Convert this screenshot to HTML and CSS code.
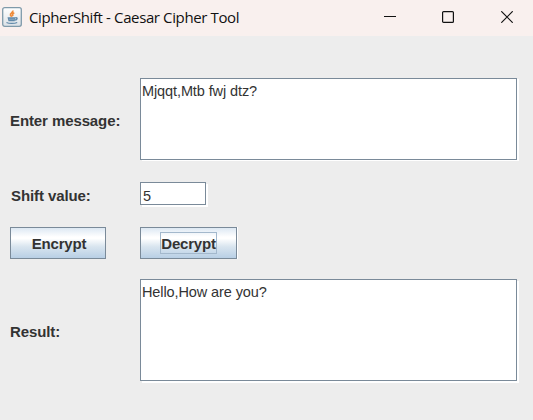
FILE: index.html
```html
<!DOCTYPE html>
<html lang="en">
<head>
<meta charset="utf-8">
<title>CipherShift - Caesar Cipher Tool</title>
<link rel="stylesheet" href="styles.css">
</head>
<body>
<header class="titlebar">
  <svg class="app-icon" width="20" height="20" viewBox="0 0 20 20">
    <defs><linearGradient id="tile" x1="0" y1="0" x2="0" y2="1"><stop offset="0" stop-color="#fff"/><stop offset="1" stop-color="#dbe1e6"/></linearGradient></defs>
    <rect x=".7" y=".7" width="18.6" height="18.6" rx="2" fill="url(#tile)" stroke="#7f9aaa" stroke-width="1.3"/>
    <path d="M10.8 3.500c.8 2-3 2.600-2.300 4.500.2.700.9 1.200 1.200 1.800M12.300 5.800c-1.700.7-2.300 1.600-1.200 3.200" fill="none" stroke="#ee8b3a" stroke-width="1.700"/>
    <path d="M5.500 10.300h8l-.8 3.900H6.500z" fill="#6189a9"/>
    <path d="M13.300 10.800c2.600-.5 2.300 2.100-.4 2.300M4.500 15.500c2.500 1.300 8 1.300 10.700 0" fill="none" stroke="#6189a9" stroke-width="1.300"/>
    <path d="M7 12.200h5.600" stroke="#a9c1d3" stroke-width=".6"/>
  </svg>
  <h1 class="title">CipherShift - Caesar Cipher Tool</h1>
  <div class="controls">
    <svg width="12" height="12" viewBox="0 0 12 12"><path d="M0 5.500h12" stroke="#111"/></svg>
    <svg width="12" height="12" viewBox="0 0 12 12"><rect x=".6" y=".6" width="10.800" height="10.800" rx="1" fill="none" stroke="#111" stroke-width="1.200"/></svg>
    <svg width="12" height="12" viewBox="0 0 12 12"><path d="M.3.300l11.400 11.400M11.700.3L.3 11.700" stroke="#111" stroke-width="1.200"/></svg>
  </div>
</header>
<main class="form">
  <span class="label label-message">Enter message:</span>
  <div class="box message">Mjqqt,Mtb fwj dtz?</div>
  <span class="label label-shift">Shift value:</span>
  <div class="box shift">5</div>
  <button class="btn encrypt"><span class="caption">Encrypt</span></button>
  <button class="btn decrypt"><span class="caption focused">Decrypt</span></button>
  <span class="label label-result">Result:</span>
  <div class="box result">Hello,How are you?</div>
</main>
</body>
</html>
```
FILE: styles.css
```css
* { box-sizing: border-box; }
body {
  margin: 0;
  height: 420px;
  background: #ededed;
  color: #333;
  font-family: "Liberation Sans", Arial, sans-serif;
  overflow: hidden;
}
.titlebar {
  display: flex;
  height: 36px;
  padding: 7px 20px 0 2px;
  background: #f9f0ee;
}
.title {
  margin: -1px 0 0 7px;
  font: 400 15px/22px "Open Sans", "Noto Sans", sans-serif;
  letter-spacing: -0.38px;
  white-space: nowrap;
  color: #111;
}
.controls {
  display: grid;
  grid-template-columns: 58px 59px 12px;
  margin: 4px 0 0 auto;
}
.form {
  display: grid;
  grid-template-columns: 130px 377px;
  grid-template-rows: 83px 24px 32px 102px;
  row-gap: 21px;
  padding: 42px 0 0 10px;
  align-items: center;
  justify-items: start;
}
.label {
  font-size: 15px;
  line-height: 18px;
  font-weight: bold;
  letter-spacing: -0.1px;
  white-space: nowrap;
}
.label-message { padding-top: 3px; }
.label-shift { padding: 4px 0 0 1px; }
.label-result { padding-top: 1px; }
.box {
  align-self: start;
  width: 377px;
  height: 82px;
  padding: 4px 1px 0;
  border: 1px solid #7a8a99;
  background: #fff;
  box-shadow: 2px 1px 0 #fff;
  font-size: 14.5px;
  line-height: 17px;
  letter-spacing: -0.1px;
  white-space: nowrap;
}
.shift { width: 66px; height: 23px; padding: 5px 2px 0; box-shadow: 2px 2px 0 #fff; }
.result { height: 102px; margin-top: -1px; }
.btn {
  display: flex;
  align-items: center;
  justify-content: center;
  width: 96px;
  height: 32px;
  padding: 0;
  border: 1px solid #7a8a99;
  background: linear-gradient(#dde8f3 0%, #fff 30%, #fff 35%, #d9e5ef 62%, #b8cfe5 100%);
  color: #333;
  font: bold 15px/18px "Liberation Sans", Arial, sans-serif;
  letter-spacing: -0.2px;
}
.encrypt .caption { padding: 2px 0 0 2px; }
.decrypt { width: 97px; box-shadow: 1px 0 0 #fff; }
.focused {
  width: 57px;
  height: 22px;
  padding-top: 2px;
  border: 1px solid #a3b8cc;
}
.result { box-shadow: 2px 2px 0 #fff; }
```
